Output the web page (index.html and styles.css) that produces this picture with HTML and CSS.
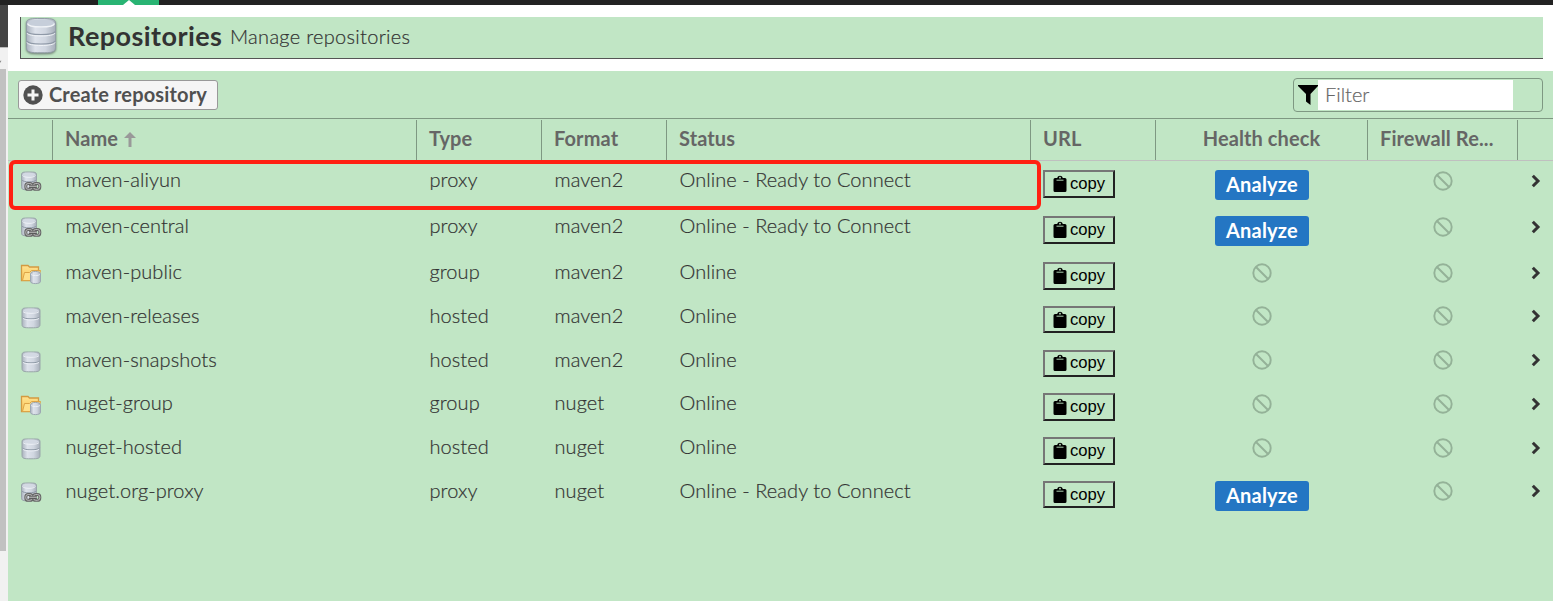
FILE: index.html
```html
<!DOCTYPE html>
<html lang="en">
<head>
<meta charset="utf-8">
<title>Repositories</title>
<link rel="stylesheet" href="styles.css">
</head>
<body>
<svg class="defs" aria-hidden="true">
  <defs>
    <linearGradient id="metal"><stop offset="0" stop-color="#aab2be"/><stop offset=".3" stop-color="#dde2eb"/><stop offset=".65" stop-color="#d0d6e0"/><stop offset="1" stop-color="#a7afba"/></linearGradient>
    <linearGradient id="gold" x2="0" y2="1"><stop offset="0" stop-color="#ffe391"/><stop offset="1" stop-color="#f8c456"/></linearGradient>
    <symbol id="db" viewBox="0 0 20 22">
      <path d="M1 4C1 .5 3.500 1 10 1S19 .5 19 4V17.500C19 20.500 17 20.800 10 20.800S1 20.500 1 17.500Z" fill="url(#metal)" stroke="#99a5a9"/>
      <ellipse cx="10" cy="3.600" rx="7.800" ry="2" fill="#d3d9e3"/>
      <path d="M1.500 9.800C2 12.500 18 12.500 18.500 9.800" fill="none" stroke="#8e99a6"/>
      <path d="M2 11.200C3 13.500 17 13.500 18 11.200M2 4.500C3 7 17 7 18 4.500" fill="none" stroke="#edf1f6" stroke-width=".9"/>
    </symbol>
    <symbol id="proxy" viewBox="0 0 22 22">
      <path d="M1.500 4C1.500 1 3 1 9 1S16.500 1 16.500 4V15.500C16.500 18.800 15 18.800 9 18.800S1.500 18.800 1.500 15.500Z" fill="url(#metal)" stroke="#99a5a9"/>
      <ellipse cx="9" cy="3.600" rx="6.500" ry="1.900" fill="#d3d9e3"/>
      <path d="M2 9C3 11.500 15 11.500 16 9" fill="none" stroke="#8e99a6"/>
      <path d="M2.500 4.500C4 7 14 7 15.500 4.500" fill="none" stroke="#edf1f6"/>
      <g fill="none" stroke="#666" stroke-width="3"><rect x="5.800" y="12.500" width="6.400" height="5.800" rx="2.400"/><rect x="13.400" y="12.500" width="6.400" height="5.800" rx="2.400"/></g>
      <g fill="none" stroke="#b9b9b9" stroke-width="1"><rect x="5.800" y="12.500" width="6.400" height="5.800" rx="2.400"/><rect x="13.400" y="12.500" width="6.400" height="5.800" rx="2.400"/></g>
      <path d="M9 15.400H16.800" stroke="#555" stroke-width="3"/><path d="M9 15.200H16.800" stroke="#ccc"/>
    </symbol>
    <symbol id="group" viewBox="0 0 22 22">
      <path d="M1.500 17.500V2.500H8L9.500 4H18.500V17.500Z" fill="url(#gold)" stroke="#d39a42" stroke-width="1.300"/>
      <path d="M2.500 17.500L4.500 9.500H9.500L11.500 7.500H20.500L18 17.500Z" fill="#ffe08a" stroke="#dda447"/>
      <path d="M10.500 10.500C10.500 7.800 20.500 7.800 20.500 10.500V18.500C20.500 21.300 10.500 21.300 10.500 18.500Z" fill="url(#metal)" stroke="#9ca7b2"/>
      <path d="M11 11.200C12 13 19 13 20 11.200" fill="none" stroke="#edf1f6"/>
    </symbol>
    <symbol id="none" viewBox="0 0 20 20"><circle cx="10" cy="10" r="8.700" fill="none" stroke="#94b298" stroke-width="1.900"/><path d="M4 4L16 16" stroke="#94b298" stroke-width="1.900"/></symbol>
    <symbol id="go" viewBox="0 0 10 14"><path d="M1.800 1.800L7 7L1.800 12.200" fill="none" stroke="#333" stroke-width="3"/></symbol>
    <symbol id="clip" viewBox="0 0 14 18"><path d="M2 3H4.300C4.600 0 9.400 0 9.700 3H12Q13.500 3 13.500 4.500V15.500Q13.500 17 12 17H2Q.5 17 .5 15.500V4.500Q.5 3 2 3Z" fill="#000"/><path d="M3.500 5.200H10.500" stroke="#c1e6c5" stroke-width=".9"/><circle cx="7" cy="2.700" r=".9" fill="#c1e6c5"/></symbol>
  </defs>
</svg>
<div class="topbar"><div class="tab"><span class="notch"></span></div></div>
<div class="page">
  <aside class="side"><div class="side-head"></div><div class="track"><svg class="arrow" viewBox="0 0 4 4"><path d="M0 0L2 3H0Z" fill="#888"/></svg><div class="thumb"></div></div></aside>
  <main class="main">
    <header class="head"><div class="title-box">
      <svg class="title-icon" viewBox="0 0 32 38">
        <path d="M1.500 6C1.500 1.500 7 1.500 16 1.500S30.500 1.500 30.500 6V30.500C30.500 35.500 26 35.800 16 35.800S1.500 35.500 1.500 30.500Z" fill="url(#metal)" stroke="#929da6"/>
        <ellipse cx="16" cy="6" rx="13.300" ry="3.600" fill="#c6ceda"/>
        <path d="M2.500 6.500C3.500 11 28.500 11 29.500 6.500" fill="none" stroke="#f0f3f7" stroke-width="1.300"/>
        <path d="M2 14.500C3 18.500 29 18.500 30 14.500M2 24C3 28 29 28 30 24" fill="none" stroke="#8f99a7" stroke-width="1.200"/>
        <path d="M2 16C3 20 29 20 30 16M2 25.500C3 29.500 29 29.500 30 25.500" fill="none" stroke="#f0f3f7"/>
      </svg>
      <h1 class="title">Repositories</h1><span class="subtitle">Manage repositories</span>
    </div></header>
    <div class="toolbar">
      <button class="create"><svg class="plus" viewBox="0 0 20 20"><circle cx="10" cy="10" r="9.700" fill="#505050"/><path d="M10 4.500V15.500M4.500 10H15.500" stroke="#f5f5f5" stroke-width="3"/></svg><span class="create-label">Create repository</span></button>
      <div class="filter"><svg class="funnel" viewBox="0 0 20 20"><path d="M0 0H20V1L12.500 9V20L8 16.500V9L0 1Z"/></svg><input class="filter-input" placeholder="Filter"></div>
    </div>
    <div class="grid header-row">
      <div class="th"></div><div class="th">Name<svg class="sort" viewBox="0 0 12 15"><path d="M6 0L12 6H7.500V15H4.500V6H0Z" fill="#999"/></svg></div><div class="th">Type</div><div class="th">Format</div><div class="th">Status</div><div class="th">URL</div><div class="th center">Health check</div><div class="th">Firewall Re...</div><div class="th last"></div>
    </div>
    <div class="rows">
      <div class="grid row tall marked"><svg class="kind"><use href="#proxy"/></svg><span class="td">maven-aliyun</span><span class="td">proxy</span><span class="td">maven2</span><span class="td status">Online - Ready to Connect</span><button class="copy"><svg class="clip"><use href="#clip"/></svg>copy</button><button class="analyze">Analyze</button><svg class="none"><use href="#none"/></svg><svg class="go"><use href="#go"/></svg></div>
      <div class="grid row tall"><svg class="kind"><use href="#proxy"/></svg><span class="td">maven-central</span><span class="td">proxy</span><span class="td">maven2</span><span class="td status">Online - Ready to Connect</span><button class="copy"><svg class="clip"><use href="#clip"/></svg>copy</button><button class="analyze">Analyze</button><svg class="none"><use href="#none"/></svg><svg class="go"><use href="#go"/></svg></div>
      <div class="grid row"><svg class="kind"><use href="#group"/></svg><span class="td">maven-public</span><span class="td">group</span><span class="td">maven2</span><span class="td status">Online</span><button class="copy"><svg class="clip"><use href="#clip"/></svg>copy</button><svg class="none"><use href="#none"/></svg><svg class="none"><use href="#none"/></svg><svg class="go"><use href="#go"/></svg></div>
      <div class="grid row"><svg class="kind disk"><use href="#db"/></svg><span class="td">maven-releases</span><span class="td">hosted</span><span class="td">maven2</span><span class="td status">Online</span><button class="copy"><svg class="clip"><use href="#clip"/></svg>copy</button><svg class="none"><use href="#none"/></svg><svg class="none"><use href="#none"/></svg><svg class="go"><use href="#go"/></svg></div>
      <div class="grid row"><svg class="kind disk"><use href="#db"/></svg><span class="td">maven-snapshots</span><span class="td">hosted</span><span class="td">maven2</span><span class="td status">Online</span><button class="copy"><svg class="clip"><use href="#clip"/></svg>copy</button><svg class="none"><use href="#none"/></svg><svg class="none"><use href="#none"/></svg><svg class="go"><use href="#go"/></svg></div>
      <div class="grid row"><svg class="kind"><use href="#group"/></svg><span class="td">nuget-group</span><span class="td">group</span><span class="td">nuget</span><span class="td status">Online</span><button class="copy"><svg class="clip"><use href="#clip"/></svg>copy</button><svg class="none"><use href="#none"/></svg><svg class="none"><use href="#none"/></svg><svg class="go"><use href="#go"/></svg></div>
      <div class="grid row"><svg class="kind disk"><use href="#db"/></svg><span class="td">nuget-hosted</span><span class="td">hosted</span><span class="td">nuget</span><span class="td status">Online</span><button class="copy"><svg class="clip"><use href="#clip"/></svg>copy</button><svg class="none"><use href="#none"/></svg><svg class="none"><use href="#none"/></svg><svg class="go"><use href="#go"/></svg></div>
      <div class="grid row tall"><svg class="kind"><use href="#proxy"/></svg><span class="td">nuget.org-proxy</span><span class="td">proxy</span><span class="td">nuget</span><span class="td status">Online - Ready to Connect</span><button class="copy"><svg class="clip"><use href="#clip"/></svg>copy</button><button class="analyze">Analyze</button><svg class="none"><use href="#none"/></svg><svg class="go"><use href="#go"/></svg></div>
    </div>
  </main>
</div>
</body>
</html>
```
FILE: styles.css
```css
*, *::after { box-sizing: border-box; }
body { margin: 0; height: 601px; overflow: hidden; background: #c1e6c5; color: #333; font-family: Lato, "Open Sans", sans-serif; }
button, input { font-family: inherit; margin: 0; }
svg { display: block; }
.defs { position: absolute; width: 0; height: 0; }
.topbar { height: 5px; background: #222; padding-left: 98px; }
.tab { width: 61px; height: 5px; background: #29b473; display: flex; justify-content: center; align-items: flex-end; }
.notch { border: 6px solid transparent; border-top: 0; border-bottom: 5px solid #fff; }
.page { display: flex; height: 596px; }
.side { width: 8px; background: #f1f1f1; }
.side-head { height: 43px; background: #444; border-bottom: 1px solid #bbb; }
.arrow { width: 3px; height: 3px; margin: 12px 0 6px; transform: scaleY(-1); }
.thumb { width: 6px; height: 482px; background: #c1c1c1; }
.main { flex: 1; }
.head { height: 66px; background: #fff; padding: 12px 10px 0 12px; }
.title-box { height: 42px; background: #c1e6c5; border-left: 1px solid #555; border-bottom: 1px solid #555; display: flex; padding-left: 4px; }
.title-icon { width: 32px; height: 38px; filter: drop-shadow(0 1px 1px #6a7a70); }
.title { margin: 0 0 0 11px; width: 162px; font-size: 27px; line-height: 37px; font-weight: 700; letter-spacing: .44px; white-space: nowrap; }
.subtitle { font-size: 20px; line-height: 39px; font-weight: 300; letter-spacing: .3px; white-space: nowrap; -webkit-text-stroke: .2px #333; }
.toolbar { height: 48px; border-bottom: 1px solid #7e9882; display: flex; justify-content: space-between; align-items: flex-start; padding: 7px 10px 0 10px; }
.create { height: 30px; width: 200px; margin-top: 2px; border: 1px solid #999; border-radius: 3px; background: #f5f5f5; color: #505050; padding: 0 0 0 4px; display: flex; align-items: center; gap: 6px; font-size: 20px; font-weight: 700; letter-spacing: .15px; white-space: nowrap; }
.create-label { padding-bottom: 2px; }
.plus { width: 20px; height: 20px; flex: none; }
.filter { width: 250px; height: 34px; border: 1px solid #7e9882; border-radius: 4px; display: flex; align-items: center; padding-left: 4px; }
.funnel { width: 20px; height: 20px; }
.filter-input { width: 195px; height: 30px; border: 0; padding: 0 7px 2px; background: #fff; font-size: 20px; font-weight: 300; }
.filter-input::placeholder { color: #666; -webkit-text-stroke: .2px #666; }
.grid { display: grid; grid-template-columns: 45px 364px 125px 125px 364px 125px 212px 150px 35px; }
.header-row { height: 42px; padding-top: 1px; border-bottom: 1px solid #c0c0c0; }
.th { border-right: 1px solid #7e9882; padding-left: 12px; display: flex; font-size: 20px; line-height: 37px; font-weight: 700; letter-spacing: .1px; color: #666; white-space: nowrap; }
.center { padding: 0; justify-content: center; }
.last { border: 0; }
.sort { width: 12px; height: 15px; margin: 12px 0 0 6px; }
.row { height: 43.8px; align-items: start; }
.tall { height: 46px; }
.kind { width: 22px; height: 22px; margin: 10px 0 0 12px; }
.disk { width: 20px; margin-left: 13px; }
.td { padding-left: 12.500px; font-size: 20px; line-height: 36px; font-weight: 300; letter-spacing: .07px; white-space: nowrap; -webkit-text-stroke: .2px #333; }
.copy { width: 72px; height: 27.500px; margin: 9px 0 0 12px; border: 2px solid; border-color: #767676 #222 #222 #767676; background: #c1e6c5; color: #000; padding: 0 0 0 8px; display: flex; align-items: center; gap: 3px; font: 16.6px "Liberation Sans", sans-serif; }
.clip { width: 14px; height: 18px; flex: none; }
.analyze { justify-self: center; width: 94px; height: 30px; margin-top: 9px; border: 0; border-radius: 3px; padding: 0 0 2px; background: #2476c3; color: #fff; font-size: 20px; font-weight: 700; letter-spacing: .2px; }
.none { width: 20px; height: 20px; justify-self: center; margin-top: 9.500px; }
.go { width: 10px; height: 14px; margin: 12.500px 0 0 13px; }
.marked { position: relative; }
.marked::after { content: ""; position: absolute; left: 1px; top: -1px; width: 1032px; height: 50px; border: 4px solid #ff2012; border-radius: 6px; }
```
